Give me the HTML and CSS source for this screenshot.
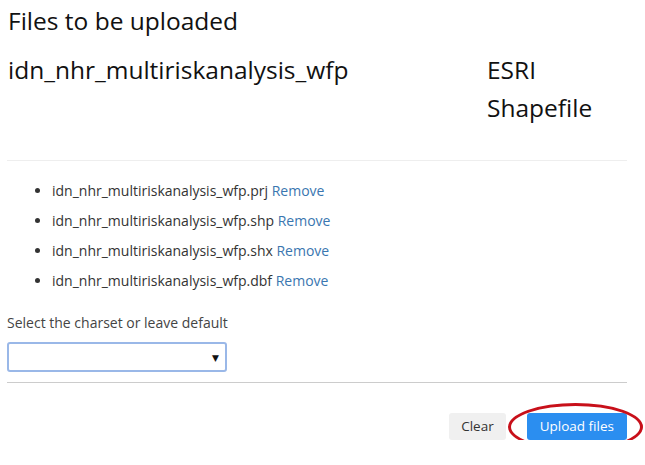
FILE: index.html
```html
<!DOCTYPE html>
<html>
<head>
<meta charset="utf-8">
<link rel="stylesheet" href="styles.css">
</head>
<body>
<div class="panel">
  <h2 class="title">Files to be uploaded</h2>
  <div class="layer-row">
    <div class="layer-name">idn_nhr_multiriskanalysis_wfp</div>
    <div class="layer-type">ESRI Shapefile</div>
  </div>
  <hr class="sep-light">
  <ul class="file-list">
    <li>idn_nhr_multiriskanalysis_wfp.prj <a class="remove">Remove</a></li>
    <li>idn_nhr_multiriskanalysis_wfp.shp <a class="remove">Remove</a></li>
    <li>idn_nhr_multiriskanalysis_wfp.shx <a class="remove">Remove</a></li>
    <li>idn_nhr_multiriskanalysis_wfp.dbf <a class="remove">Remove</a></li>
  </ul>
  <label class="charset-label">Select the charset or leave default</label>
  <div class="select-box"><span class="caret">&#9660;</span></div>
  <hr class="sep-dark">
  <div class="actions">
    <button class="btn btn-clear">Clear</button>
    <span class="highlight">
      <button class="btn btn-upload">Upload files</button>
    </span>
  </div>
</div>
</body>
</html>
```
FILE: styles.css
```css
html, body {
  margin: 0;
  padding: 0;
  background: #fff;
}
body {
  font-family: "Open Sans", "DejaVu Sans", sans-serif;
  color: #333;
}
.panel {
  width: 620px;
  padding: 0 0 0 7px;
}
.title {
  margin: 0;
  padding: 4px 0 0 1px;
  font-size: 24.5px;
  font-weight: 400;
  line-height: 33px;
  color: #111;
}
.layer-row {
  display: grid;
  grid-template-columns: 480px 140px;
  margin-top: 14px;
}
.layer-name, .layer-type {
  font-size: 24.5px;
  line-height: 38px;
  color: #111;
}
.layer-name {
  padding-left: 1px;
}
.sep-light {
  border: 0;
  border-top: 1px solid #eee;
  margin: 33px 0 0 0;
}
.file-list {
  margin: 15px 0 0 0;
  padding: 0 0 0 45px;
  font-size: 14px;
}
.file-list li {
  line-height: 30px;
}
.remove {
  color: #3a76b0;
}
.charset-label {
  display: block;
  margin-top: 17px;
  font-size: 14px;
  color: #444;
  line-height: 20px;
}
.select-box {
  margin-top: 9px;
  width: 216px;
  height: 26px;
  border: 2px solid #9ab8e8;
  border-radius: 3px;
  display: flex;
  align-items: center;
  justify-content: flex-end;
}
.caret {
  font-size: 9px;
  color: #111;
  margin-right: 6px;
}
.sep-dark {
  border: 0;
  border-top: 1px solid #ccc;
  margin: 10px 0 0 0;
}
.actions {
  display: flex;
  justify-content: flex-end;
  align-items: center;
  margin-top: 30px;
  gap: 21px;
}
.btn {
  font-family: "Open Sans", "DejaVu Sans", sans-serif;
  font-size: 13.5px;
  border: 0;
  border-radius: 3px;
  height: 27px;
  padding: 0 12px;
  line-height: 27px;
}
.btn-clear {
  background: #f0f0f0;
  color: #333;
}
.btn-upload {
  background: #2b8ef0;
  color: #fff;
  padding: 0 13px;
}
.highlight {
  position: relative;
  display: inline-block;
  line-height: 0;
}
.highlight::after {
  content: "";
  position: absolute;
  left: -19px;
  right: -16px;
  top: -10px;
  bottom: -11px;
  border: 3px solid #c8101a;
  border-radius: 50%;
  pointer-events: none;
}
```
